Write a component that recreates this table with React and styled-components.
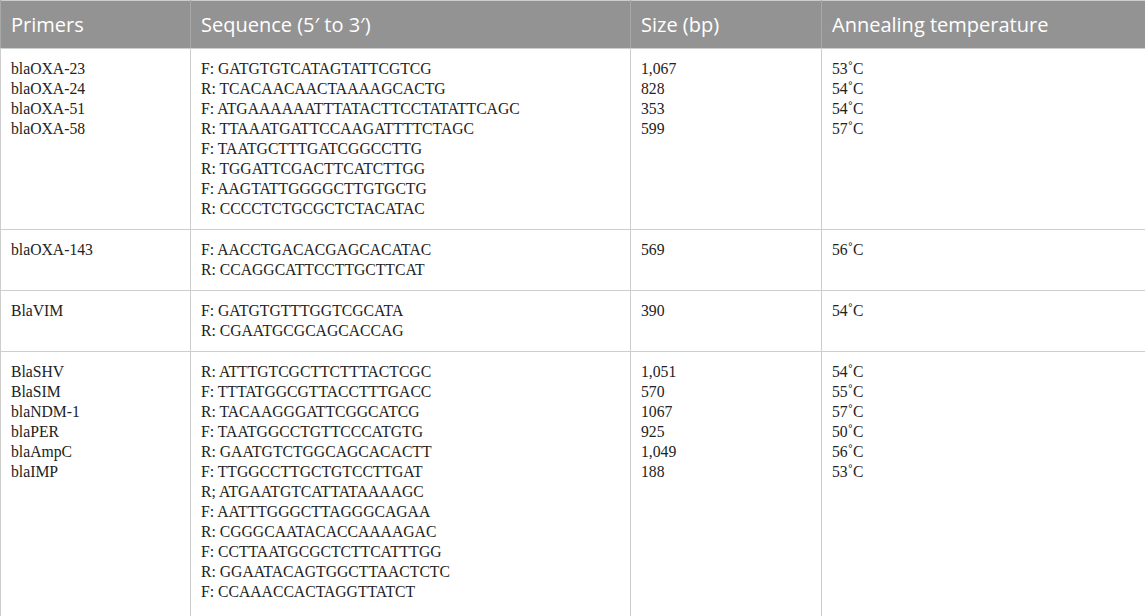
import React from "react";
import styled, { createGlobalStyle } from "styled-components";

const Global = createGlobalStyle`
  html, body {
    margin: 0;
    padding: 0;
    background: #ffffff;
  }
`;

const Table = styled.table`
  width: 1145px;
  table-layout: fixed;
  border-collapse: collapse;
  border: 1px solid #cdcdcd;
`;

const HeadRow = styled.tr`
  background: #939393;
`;

const HeadCell = styled.th`
  height: 47px;
  padding: 0 10px;
  text-align: left;
  font-family: "Open Sans", "Noto Sans", sans-serif;
  font-size: 20px;
  font-weight: 400;
  color: #ffffff;
  border-left: 1px solid #a9a9a9;
  border-bottom: 1px solid #cdcdcd;
  white-space: nowrap;
`;

const Cell = styled.td`
  vertical-align: top;
  padding: 10px 10px ${(p) => (p.$tail ? "14px" : "10px")};
  font-family: "Liberation Serif", "Times New Roman", serif;
  font-size: 15.7px;
  line-height: 20px;
  color: #222222;
  border: 1px solid #cdcdcd;
  white-space: nowrap;
`;

const Line = styled.div``;

const columns = [
  { title: "Primers", width: 190 },
  { title: "Sequence (5′ to 3′)", width: 440 },
  { title: "Size (bp)", width: 191 },
  { title: "Annealing temperature", width: 324 },
];

const rows = [
  {
    primers: ["blaOXA-23", "blaOXA-24", "blaOXA-51", "blaOXA-58"],
    seqs: [
      "F: GATGTGTCATAGTATTCGTCG",
      "R: TCACAACAACTAAAAGCACTG",
      "F: ATGAAAAAATTTATACTTCCTATATTCAGC",
      "R: TTAAATGATTCCAAGATTTTCTAGC",
      "F: TAATGCTTTGATCGGCCTTG",
      "R: TGGATTCGACTTCATCTTGG",
      "F: AAGTATTGGGGCTTGTGCTG",
      "R: CCCCTCTGCGCTCTACATAC",
    ],
    sizes: ["1,067", "828", "353", "599"],
    temps: ["53˚C", "54˚C", "54˚C", "57˚C"],
  },
  {
    primers: ["blaOXA-143"],
    seqs: ["F: AACCTGACACGAGCACATAC", "R: CCAGGCATTCCTTGCTTCAT"],
    sizes: ["569"],
    temps: ["56˚C"],
  },
  {
    primers: ["BlaVIM"],
    seqs: ["F: GATGTGTTTGGTCGCATA", "R: CGAATGCGCAGCACCAG"],
    sizes: ["390"],
    temps: ["54˚C"],
  },
  {
    primers: ["BlaSHV", "BlaSIM", "blaNDM-1", "blaPER", "blaAmpC", "blaIMP"],
    seqs: [
      "R: ATTTGTCGCTTCTTTACTCGC",
      "F: TTTATGGCGTTACCTTTGACC",
      "R: TACAAGGGATTCGGCATCG",
      "F: TAATGGCCTGTTCCCATGTG",
      "R: GAATGTCTGGCAGCACACTT",
      "F: TTGGCCTTGCTGTCCTTGAT",
      "R; ATGAATGTCATTATAAAAGC",
      "F: AATTTGGGCTTAGGGCAGAA",
      "R: CGGGCAATACACCAAAAGAC",
      "F: CCTTAATGCGCTCTTCATTTGG",
      "R: GGAATACAGTGGCTTAACTCTC",
      "F: CCAAACCACTAGGTTATCT",
    ],
    sizes: ["1,051", "570", "1067", "925", "1,049", "188"],
    temps: ["54˚C", "55˚C", "57˚C", "50˚C", "56˚C", "53˚C"],
  },
];

function Lines({ items }) {
  return items.map((t, i) => <Line key={i}>{t}</Line>);
}

export default function App() {
  return (
    <>
      <Global />
      <Table>
        <colgroup>
          {columns.map((c) => (
            <col key={c.title} style={{ width: c.width }} />
          ))}
        </colgroup>
        <thead>
          <HeadRow>
            {columns.map((c) => (
              <HeadCell key={c.title}>{c.title}</HeadCell>
            ))}
          </HeadRow>
        </thead>
        <tbody>
          {rows.map((r, i) => {
            const tail = i === rows.length - 1;
            return (
              <tr key={i}>
                <Cell $tail={tail}><Lines items={r.primers} /></Cell>
                <Cell $tail={tail}><Lines items={r.seqs} /></Cell>
                <Cell $tail={tail}><Lines items={r.sizes} /></Cell>
                <Cell $tail={tail}><Lines items={r.temps} /></Cell>
              </tr>
            );
          })}
        </tbody>
      </Table>
    </>
  );
}
